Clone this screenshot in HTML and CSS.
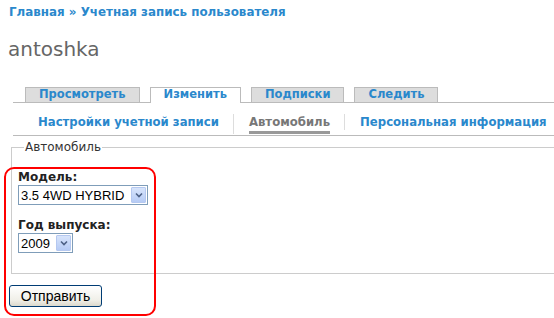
FILE: index.html
```html
<!DOCTYPE html>
<html lang="ru">
<head>
    <meta charset="UTF-8">
    <title>antoshka</title>
    <link rel="stylesheet" href="styles.css">
</head>
<body>
    <div class="breadcrumb">
        <a href="#">Главная</a> » <a href="#">Учетная запись пользователя</a>
    </div>
    <h1 class="title">antoshka</h1>

    <ul class="tabs">
        <li><a href="#">Просмотреть</a></li>
        <li class="active"><a href="#">Изменить</a></li>
        <li><a href="#">Подписки</a></li>
        <li><a href="#">Следить</a></li>
    </ul>
    <ul class="subtabs">
        <li><a href="#">Настройки учетной записи</a></li>
        <li class="active"><a href="#">Автомобиль</a></li>
        <li><a href="#">Персональная информация</a></li>
    </ul>

    <form class="car-form">
        <fieldset>
            <legend>Автомобиль</legend>
            <div class="form-item">
                <label for="model">Модель:</label>
                <span class="select-wrap">
                    <select id="model">
                        <option>3.5 4WD HYBRID</option>
                    </select>
                    <span class="select-btn">
                        <svg width="8" height="6" viewBox="0 0 8 6"><path d="M1 1.5 L4 4.5 L7 1.5" fill="none" stroke="#4d6185" stroke-width="1.6"/></svg>
                    </span>
                </span>
            </div>
            <div class="form-item">
                <label for="year">Год выпуска:</label>
                <span class="select-wrap">
                    <select id="year">
                        <option>2009</option>
                    </select>
                    <span class="select-btn">
                        <svg width="8" height="6" viewBox="0 0 8 6"><path d="M1 1.5 L4 4.5 L7 1.5" fill="none" stroke="#4d6185" stroke-width="1.6"/></svg>
                    </span>
                </span>
            </div>
        </fieldset>
        <button type="button" class="submit">Отправить</button>
        <!-- red marker drawn over the screenshot -->
        <div class="marker"></div>
    </form>
</body>
</html>
```

FILE: styles.css
```css
* { box-sizing: border-box; }

html { overflow: hidden; }

body {
    margin: 0;
    font-family: "DejaVu Sans", Verdana, sans-serif;
    font-size: 12px;
    color: #333;
    background: #fff;
}

a {
    color: #2a88cc;
    text-decoration: none;
    font-weight: bold;
}

.breadcrumb {
    padding: 4px 9px 0;
    height: 20px;
    line-height: 16px;
    font-size: 11.9px;
    color: #2a88cc;
    font-weight: bold;
}

.title {
    margin: 14px 0 0 8px;
    font-size: 20px;
    font-weight: normal;
    line-height: 30px;
    color: #666;
}

.tabs {
    list-style: none;
    margin: 23px 0 0 13px;
    padding: 0 0 0 12px;
    display: flex;
    gap: 10px;
    border-bottom: 1px solid #bbb;
    width: 700px;
    font-size: 11.5px;
}

.tabs li {
    background: #ddd;
    border: 1px solid #bbb;
    border-bottom: none;
    padding: 0 13px;
    height: 15px;
    line-height: 13px;
}

.tabs li.active {
    background: #fff;
    height: 16px;
    margin-bottom: -1px;
}

.subtabs {
    list-style: none;
    margin: 0 0 0 13px;
    padding: 11px 0 0 25px;
    display: flex;
    align-items: flex-start;
    border-bottom: 1px solid #bbb;
    width: 700px;
    height: 33px;
    font-size: 11.7px;
}

.subtabs li {
    line-height: 16px;
}

.subtabs li + li {
    border-left: 1px solid #ddd;
    margin-left: 14px;
    padding-left: 15px;
}

.subtabs li.active a {
    color: #777;
    border-bottom: 3px solid #999;
    display: inline-block;
    padding-bottom: 1px;
}

.car-form {
    position: relative;
    margin-top: 4px;
    padding-bottom: 14px;
}

fieldset {
    margin: 0 0 0 11px;
    padding: 17px 0 14px 6px;
    border: 1px solid #ccc;
    border-right: none;
    width: 700px;
    height: 134px;
}

legend {
    padding: 0 1px;
    margin-left: 6px;
    font-size: 12px;
    line-height: 14px;
    color: #333;
}

.form-item {
    margin-bottom: 14px;
}

.form-item label {
    display: block;
    font-weight: bold;
    color: #222;
    line-height: 13px;
    margin-bottom: 1px;
}

.select-wrap {
    position: relative;
    display: inline-block;
}

select {
    appearance: none;
    -webkit-appearance: none;
    font-family: "Liberation Sans", Arial, sans-serif;
    font-size: 13px;
    color: #000;
    height: 20px;
    border: 1px solid #7f9db9;
    background: #fff;
    padding: 0 20px 0 2px;
    border-radius: 0;
    display: block;
}

#model { width: 130px; }
#year { width: 55px; }

.select-btn {
    position: absolute;
    right: 2px;
    top: 2px;
    width: 15px;
    height: 16px;
    background: linear-gradient(#d7e4fb, #b6cbf5);
    border: 1px solid #b5c8f0;
    border-radius: 1px;
    display: flex;
    align-items: center;
    justify-content: center;
    pointer-events: none;
}

.submit {
    display: block;
    margin: 11px 0 0 9px;
    width: 93px;
    height: 22px;
    font-family: "Liberation Sans", Arial, sans-serif;
    font-size: 14px;
    color: #000;
    border: 1px solid #003c74;
    border-radius: 3px;
    background: linear-gradient(#fff, #f0efe8 70%, #dcd9cc);
    padding: 0;
}

.marker {
    position: absolute;
    left: 4px;
    top: 27px;
    width: 152px;
    height: 149px;
    border: 2px solid #f00;
    border-radius: 10px;
    pointer-events: none;
}
```
